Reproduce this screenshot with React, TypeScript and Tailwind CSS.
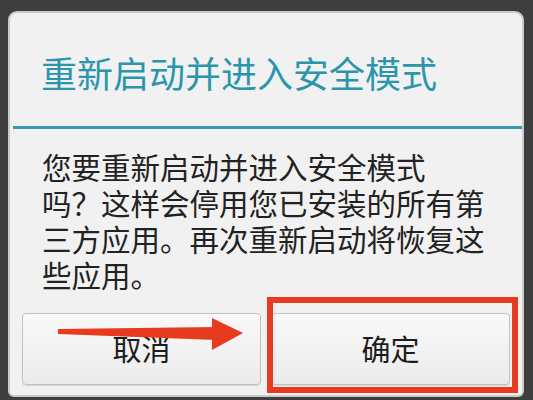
import React from 'react';

const cjk = { fontFamily: '"Noto Sans CJK SC", "Noto Sans", sans-serif' };

function DialogButton({ label }: { label: string }) {
  return (
    <button
      className="flex-1 h-[72px] rounded-[4px] border border-[#c2c2c2] bg-gradient-to-b from-[#f9f9f9] to-[#ebebeb] shadow-[0_1px_0_#d8d8d8] text-[29px] text-[#1c1c1c] flex items-center justify-center"
      style={cjk}
    >
      {label}
    </button>
  );
}

export default function App() {
  return (
    <div className="relative w-[533px] h-[400px] overflow-hidden bg-[#3e3e3e] pt-[11px] pl-[8px] pr-[9px]" style={cjk}>
      {/* Dialog */}
      <div className="h-[386px] flex flex-col rounded-t-[9px] rounded-b-[6px] border-2 border-[#cbcbcb] bg-[#f1f1f1]">
        {/* Title */}
        <h1 className="pt-[35px] pl-[31px] text-[36px] leading-[48px] text-[#2b96ab]">重新启动并进入安全模式</h1>

        {/* Divider */}
        <div className="mt-[30px] ml-[3px] h-[3px] bg-[#3a98ae]" />

        {/* Body */}
        <div className="mt-[19px] pl-[32px] text-[29.5px] leading-[36px] text-[#222222]">
          <p>您要重新启动并进入安全模式</p>
          <p>吗？这样会停用您已安装的所有第</p>
          <p>三方应用。再次重新启动将恢复这</p>
          <p>些应用。</p>
        </div>

        {/* Buttons */}
        <div className="mt-[21px] px-[12px] flex gap-[10px]">
          <DialogButton label="取消" />
          <DialogButton label="确定" />
        </div>
      </div>

      {/* Red highlight box */}
      <div className="absolute left-[267px] top-[297px] w-[251px] h-[96px] border-[6px] border-[#e63b1f] pointer-events-none" />

      {/* Red arrow */}
      <svg className="absolute left-0 top-0 pointer-events-none" width="533" height="400" viewBox="0 0 533 400">
        <polygon points="58,329 216,327 216,340 58,334" fill="#e63b1f" />
        <polygon points="212,318 243,333 212,350" fill="#e63b1f" />
      </svg>
    </div>
  );
}
